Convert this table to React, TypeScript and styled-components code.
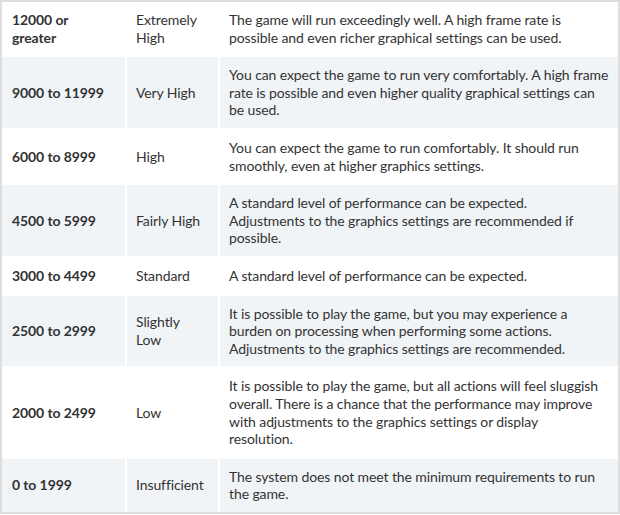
import React from "react";
import styled, { createGlobalStyle } from "styled-components";

const GlobalStyle = createGlobalStyle`
  html, body { margin: 0; padding: 0; background: #ffffff; }
  body { font-family: Lato, "Open Sans", sans-serif; }
`;

const Frame = styled.div`
  width: 620px;
  box-sizing: border-box;
  border: 2px solid #dddddd;
  background: #ffffff;
`;

const Table = styled.table`
  width: 100%;
  table-layout: fixed;
  border-collapse: collapse;
  font-family: Lato, "Open Sans", sans-serif;
  font-size: 14px;
  letter-spacing: -0.1px;
  line-height: 17.6px;
  color: #333333;
`;

const Col = styled.col<{ $w?: number }>`
  ${(p) => (p.$w ? `width: ${p.$w}px;` : "")}
`;

const Row = styled.tr<{ $shaded: boolean }>`
  background: ${(p) => (p.$shaded ? "#f1f4f7" : "#ffffff")};
  &:first-child > td { border-top: none; }
  &:last-child > td { border-bottom: none; }
`;

const Cell = styled.td<{ $bold?: boolean }>`
  border: 2px solid #ffffff;
  padding: 9px 12px 9px 9px;
  vertical-align: middle;
  text-align: left;
  white-space: pre-line;
  font-weight: ${(p) => (p.$bold ? 700 : 400)};
  &:first-child { border-left: none; padding-left: 10px; padding-right: 13px; }
  &:last-child { border-right: none; padding-right: 8px; }
`;

const rows: [string, string, string][] = [
  ["12000 or greater", "Extremely High", "The game will run exceedingly well. A high frame rate is possible and even richer graphical settings can be used."],
  ["9000 to 11999", "Very High", "You can expect the game to run very comfortably. A high frame rate is possible and even higher quality graphical settings can be used."],
  ["6000 to 8999", "High", "You can expect the game to run comfortably. It should run smoothly, even at higher graphics settings."],
  ["4500 to 5999", "Fairly High", "A standard level of performance can be expected.\nAdjustments to the graphics settings are recommended if possible."],
  ["3000 to 4499", "Standard", "A standard level of performance can be expected."],
  ["2500 to 2999", "Slightly Low", "It is possible to play the game, but you may experience a burden on processing when performing some actions. Adjustments to the graphics settings are recommended."],
  ["2000 to 2499", "Low", "It is possible to play the game, but all actions will feel sluggish overall. There is a chance that the performance may improve with adjustments to the graphics settings or display\nresolution."],
  ["0 to 1999", "Insufficient", "The system does not meet the minimum requirements to run the game."],
];

export default function App() {
  return (
    <>
      <GlobalStyle />
      <Frame>
        <Table>
          <colgroup>
            <Col $w={124} />
            <Col $w={93} />
            <Col />
          </colgroup>
          <tbody>
            {rows.map((r, i) => (
              <Row key={i} $shaded={i % 2 === 1}>
                <Cell $bold>{r[0]}</Cell>
                <Cell>{r[1]}</Cell>
                <Cell>{r[2]}</Cell>
              </Row>
            ))}
          </tbody>
        </Table>
      </Frame>
    </>
  );
}
